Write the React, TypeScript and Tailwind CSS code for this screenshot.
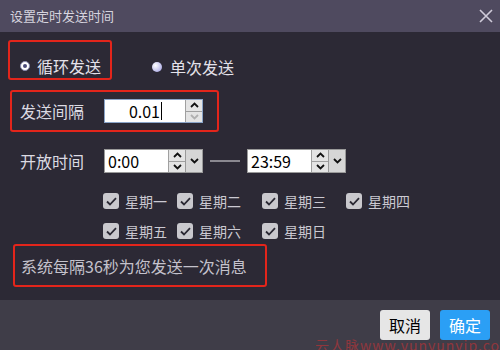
import React from "react";

const font = { fontFamily: '"Noto Sans CJK SC", "Noto Sans", sans-serif' };

function Chevron({ up, muted }: { up?: boolean; muted?: boolean }): JSX.Element {
    return (
        <svg width="9" height="6" viewBox="0 0 9 6" className="block">
            <path
                d={up ? "M1 5 L4.5 1.5 L8 5" : "M1 1 L4.5 4.5 L8 1"}
                fill="none"
                stroke={muted ? "#b0b0b0" : "#111"}
                strokeWidth="1.8"
            />
        </svg>
    );
}

function Spinner({ downMuted }: { downMuted?: boolean }): JSX.Element {
    return (
        <div className="flex flex-col w-[17px] h-full border-l border-[#a0a0a0] bg-[#e4e4e4]">
            <div className="flex-1 flex items-center justify-center border-b border-[#a0a0a0]">
                <Chevron up />
            </div>
            <div className="flex-1 flex items-center justify-center">
                <Chevron muted={downMuted} />
            </div>
        </div>
    );
}

function TimeBox({ value }: { value: string }): JSX.Element {
    return (
        <div className="flex h-[24px]">
            <div className="flex items-stretch h-full w-[82px] bg-white border border-[#9a9a9a]">
                <span className="flex-1 flex items-center pl-[3px] text-[16px] text-black">
                    {value}
                </span>
                <Spinner />
            </div>
            <div className="flex items-center justify-center w-[17px] h-full bg-[#d6d6d6] border border-l-0 border-[#9a9a9a]">
                <Chevron />
            </div>
        </div>
    );
}

function Check({ label, width }: { label: string; width: string }): JSX.Element {
    return (
        <div className={`flex items-center h-[16px] ${width}`}>
            <span className="flex items-center justify-center w-[16px] h-[16px] rounded-[3px] bg-[#c9c8cd]">
                <svg width="11" height="9" viewBox="0 0 11 9">
                    <path d="M1 4.5 L4 7.5 L10 1.2" fill="none" stroke="#2a2833" strokeWidth="1.8" />
                </svg>
            </span>
            <span className="ml-[6px] text-[14px] leading-[16px] text-[#cbc9d2]">{label}</span>
        </div>
    );
}

export default function App(): JSX.Element {
    return (
        <div className="relative w-[500px] h-[350px] overflow-hidden flex flex-col" style={font}>
            <div className="flex items-center justify-between h-[32px] bg-[#4f4a5f] pl-[10px] pr-[7px]">
                <span className="text-[13px] text-[#d6d4de]">设置定时发送时间</span>
                <svg width="14" height="14" viewBox="0 0 14 14">
                    <path d="M1 1 L13 13 M13 1 L1 13" stroke="#cfcbd9" strokeWidth="1.6" />
                </svg>
            </div>

            <div className="flex-1 bg-[#2c2935] flex flex-col">
                {/* radios */}
                <div className="flex items-center mt-[8px]">
                    <div className="ml-[8px] w-[104px] h-[40px] border-2 border-[#e3251b] rounded-[3px] flex items-center pt-[12px] pl-[10px]">
                        <span className="flex items-center justify-center w-[10px] h-[10px] rounded-full bg-white border border-[#8a8ab0]">
                            <span className="w-[4px] h-[4px] rounded-full bg-[#4a4a78]" />
                        </span>
                        <span className="ml-[7px] text-[16px] text-[#e4e2ea]">循环发送</span>
                    </div>
                    <div className="flex items-center ml-[40px] pt-[13px]">
                        <span className="w-[10px] h-[10px] rounded-full bg-[radial-gradient(circle_at_35%_35%,#ffffff,#9a98e0)]" />
                        <span className="ml-[8px] text-[16px] text-[#e4e2ea]">单次发送</span>
                    </div>
                </div>

                {/* interval */}
                <div className="ml-[10px] mt-[10px] w-[209px] h-[42px] border-2 border-[#e3251b] rounded-[3px] flex items-center pl-[8px]">
                    <span className="text-[16px] text-[#dcdae2] w-[84px]">发送间隔</span>
                    <div className="flex items-stretch h-[24px] w-[99px] bg-white border border-[#8aa4c8]">
                        <span className="flex-1 flex items-center justify-end pr-[23px] text-[16px] text-black">
                            0.01
                            <span className="ml-[1px] w-[1px] h-[18px] bg-black" />
                        </span>
                        <Spinner downMuted />
                    </div>
                </div>

                {/* open time */}
                <div className="flex items-center h-[24px] ml-[20px] mt-[17px]">
                    <span className="text-[16px] text-[#dcdae2] w-[84px]">开放时间</span>
                    <TimeBox value="0:00" />
                    <span className="mx-[7px] w-[30px] h-[2px] bg-[#8a8890]" />
                    <TimeBox value="23:59" />
                </div>

                {/* weekdays */}
                <div className="flex ml-[103px] mt-[20px]">
                    <Check label="星期一" width="w-[74px]" />
                    <Check label="星期二" width="w-[85px]" />
                    <Check label="星期三" width="w-[84px]" />
                    <Check label="星期四" width="w-[84px]" />
                </div>
                <div className="flex ml-[103px] mt-[14px]">
                    <Check label="星期五" width="w-[74px]" />
                    <Check label="星期六" width="w-[85px]" />
                    <Check label="星期日" width="w-[84px]" />
                </div>

                {/* summary */}
                <div className="ml-[13px] mt-[5px] w-[254px] h-[43px] border-2 border-[#e3251b] rounded-[3px] flex items-center pl-[6px]">
                    <span className="text-[16px] text-[#c4c2cc]">系统每隔36秒为您发送一次消息</span>
                </div>
            </div>

            <div className="h-[50px] bg-[#3f3d48] flex items-center justify-end gap-[10px] pr-[10px]">
                <button className="w-[50px] h-[30px] rounded-[3px] bg-[#e6e6e6] text-[16px] text-black">
                    取消
                </button>
                <button className="w-[50px] h-[30px] rounded-[3px] bg-[#2b9ff5] text-[16px] text-white">
                    确定
                </button>
            </div>

            <span className="absolute left-[315px] bottom-[-3px] text-[14px] leading-[16px] text-[#e03030]/50 whitespace-nowrap tracking-[1px]">
                云人脉www.yunyunvip.com
            </span>
        </div>
    );
}
